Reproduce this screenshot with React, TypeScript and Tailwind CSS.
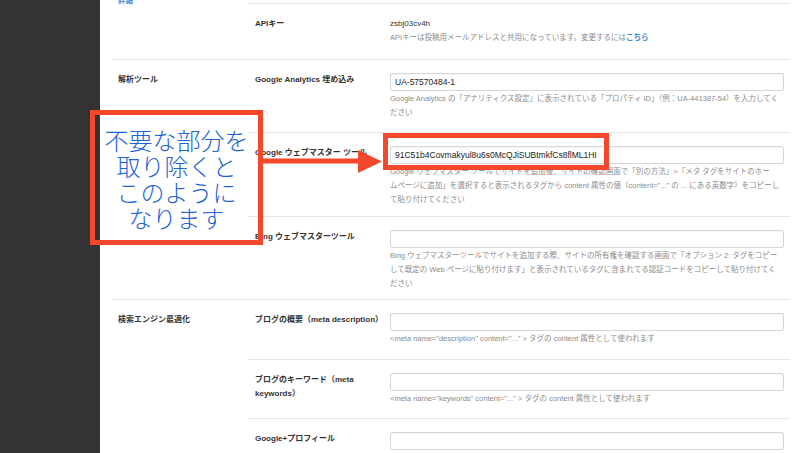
import React from "react";

const FONT = "font-['Liberation_Sans','Noto_Sans_CJK_JP',sans-serif]";

type Row = {
  label: React.ReactNode;
  value?: string;
  plain?: string;
  desc?: React.ReactNode[];
  pb: string;
};

type Group = { title?: React.ReactNode; rows: Row[] };

function Field({ row, first }: { row: Row; first: boolean }) {
  return (
    <div className={`flex pt-[13px] ${row.pb} ${first ? "" : "border-t border-[#e6e6e6]"}`}>
      <div className="w-[142px] shrink-0 pl-[7px] pr-[8px] text-[8px] font-bold leading-[14px] text-[#333]">
        {row.label}
      </div>
      <div className="flex-1 pr-[6px]">
        {row.plain !== undefined ? (
          <div className="text-[8px] leading-[14px] text-[#333]">{row.plain}</div>
        ) : (
          <div className="flex h-[18px] items-center rounded-[2px] border border-[#d6d6d6] bg-white px-[4px] text-[8.5px] text-[#222] shadow-[inset_0_1px_1px_rgba(0,0,0,0.04)]">
            {row.value}
          </div>
        )}
        {row.desc && (
          <div className={`${row.plain !== undefined ? "" : "mt-[1px]"} text-[7.5px] leading-[14px] text-[#8c8c8c]`}>
            {row.desc.map((line, i) => (
              <div key={i} className="whitespace-nowrap">
                {line}
              </div>
            ))}
          </div>
        )}
      </div>
    </div>
  );
}

const groups: Group[] = [
  {
    title: <span className="text-[7.5px] font-bold text-[#3b8fd9]">詳細</span>,
    rows: [
      {
        label: "APIキー",
        plain: "zsbj03cv4h",
        pb: "pb-[14px]",
        desc: [
          <>
            APIキーは投稿用メールアドレスと共用になっています。変更するには
            <span className="font-bold text-[#3b8fd9]">こちら</span>
          </>,
        ],
      },
    ],
  },
  {
    title: "解析ツール",
    rows: [
      {
        label: "Google Analytics 埋め込み",
        value: "UA-57570484-1",
        pb: "pb-[12px]",
        desc: [
          "Google Analytics の「アナリティクス設定」に表示されている「プロパティ ID」（例：UA-441387-54）を入力してく",
          "ださい",
        ],
      },
      {
        label: "Google ウェブマスター ツール",
        value: "91C51b4Covmakyul8u6s0McQJiSUBtmkfCs8flML1HI",
        pb: "pb-[9px]",
        desc: [
          "Google ウェブマスター ツールでサイトを追加後、サイトの確認画面で「別の方法」>「メタ タグをサイトのホー",
          "ムページに追加」を選択すると表示されるタグから content 属性の値（content=\"...\" の ... にある英数字）をコピーし",
          "て貼り付けてください",
        ],
      },
      {
        label: "Bing ウェブマスターツール",
        value: "",
        pb: "pb-[8px]",
        desc: [
          "Bing ウェブマスターツールでサイトを追加する際、サイトの所有権を確認する画面で「オプション 2: タグをコピー",
          "して既定の Web ページに貼り付けます」と表示されているタグに含まれてる認証コードをコピーして貼り付けてく",
          "ださい",
        ],
      },
    ],
  },
  {
    title: "検索エンジン最適化",
    rows: [
      {
        label: "ブログの概要（meta description）",
        value: "",
        pb: "pb-[13px]",
        desc: ["<meta name=\"description\" content=\"...\" > タグの content 属性として使われます"],
      },
      {
        label: (
          <>
            ブログのキーワード（meta
            <br />
            keywords）
          </>
        ),
        value: "",
        pb: "pb-[12px]",
        desc: ["<meta name=\"keywords\" content=\"...\" > タグの content 属性として使われます"],
      },
      { label: "Google+プロフィール", value: "", pb: "pb-[12px]" },
    ],
  },
];

export default function App() {
  return (
    <div className={`relative flex h-[453px] w-[800px] overflow-hidden bg-white ${FONT}`}>
      <aside className="w-[100px] shrink-0 bg-[#333]" />

      <main className="flex-1 pl-[12px] pr-[10px]">
        <div className="-mt-[10px]">
          {groups.map((g, gi) => (
            <div key={gi} className={`flex ${gi === 0 ? "" : "border-t border-[#e6e6e6]"}`}>
              <div
                className={`w-[136px] shrink-0 pl-[6px] text-[8px] font-bold leading-[14px] text-[#333] ${
                  gi === 0 ? "pt-[4px]" : "pt-[13px]"
                }`}
              >
                {g.title}
              </div>
              <div className="flex-1">
                {gi === 0 && <div className="h-[13px]" />}
                {g.rows.map((r, ri) => (
                  <Field key={ri} row={r} first={gi !== 0 && ri === 0} />
                ))}
              </div>
            </div>
          ))}
        </div>
      </main>

      {/* annotation box */}
      <div className="absolute left-[90px] top-[110px] flex h-[135px] w-[173px] flex-col items-center justify-center border-[5px] border-[#f4472b] pt-[3px] text-center font-['Noto_Sans_CJK_JP',sans-serif] text-[24px] font-light leading-[26px] text-[#1d63d8]">
        <div>不要な部分を</div>
        <div>取り除くと</div>
        <div>このように</div>
        <div>なります</div>
      </div>

      {/* arrow */}
      <svg className="absolute left-[263px] top-[150px]" width="120" height="24" viewBox="0 0 120 24">
        <rect x="0" y="8.5" width="97" height="5" fill="#f4472b" />
        <polygon points="95,0 119,11.5 95,23" fill="#f4472b" />
      </svg>

      {/* highlighted input */}
      <div className="absolute left-[383px] top-[133px] h-[37px] w-[226px] border-[5px] border-[#f4472b]" />
    </div>
  );
}
